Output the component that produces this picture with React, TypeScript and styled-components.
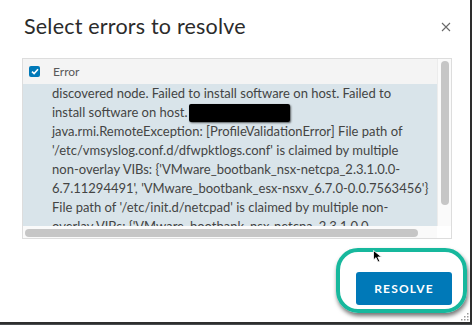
import styled, { createGlobalStyle } from "styled-components"

const GlobalStyle = createGlobalStyle`
  html, body {
    margin: 0;
    padding: 0;
    background: #4b4e51;
    font-family: Lato, "Open Sans", sans-serif;
  }
`

const Dialog = styled.div`
  position: relative;
  box-sizing: border-box;
  width: 472px;
  height: 324px;
  background: #ffffff;
  border-right: 2px solid #2e2e2e;
  border-bottom: 2px solid #2e2e2e;
  padding: 0 18px 0 22px;
  display: flex;
  flex-direction: column;
`

const Header = styled.div`
  height: 54px;
  display: flex;
  align-items: center;
  justify-content: space-between;
`

const Title = styled.h3`
  margin: 0 0 0 2px;
  font-size: 21.5px;
  line-height: 1;
  font-weight: 400;
  color: #2b2b2b;
  letter-spacing: 0.2px;
`

const Close = styled.button`
  border: 0;
  background: none;
  padding: 0;
  margin-right: 1px;
  width: 10px;
  height: 10px;
  display: flex;
`

const Panel = styled.div`
  margin-top: 4px;
  height: 179px;
  border: 1px solid #dddddd;
  display: grid;
  grid-template-columns: 1fr 14px;
  grid-template-rows: 1fr 12px;
`

const Grid = styled.div`
  display: flex;
  flex-direction: column;
  overflow: hidden;
`

const GridHead = styled.div`
  height: 25px;
  flex-shrink: 0;
  display: flex;
  align-items: center;
  gap: 13px;
  padding-left: 6px;
  background: #f4f4f4;
  font-size: 12px;
  color: #595959;
`

const Check = styled.span`
  width: 11px;
  height: 11px;
  border-radius: 2px;
  background: #0079b8;
  display: flex;
  align-items: center;
  justify-content: center;
`

const GridBody = styled.div`
  flex: 1;
  background: #d9e4ea;
  padding-left: 29px;
  overflow: hidden;
`

const Lines = styled.div`
  font-size: 13px;
  line-height: 19px;
  color: #444444;
`

const Line = styled.div`
  white-space: nowrap;
  display: flex;
  align-items: center;
  height: 19px;
`

const Redact = styled.span`
  display: inline-block;
  width: 101px;
  height: 18px;
  margin-left: 1px;
  background: #000;
  border-radius: 2px;
  box-shadow: 1px 1px 2px rgba(0, 0, 0, 0.6);
`

const VTrack = styled.div`
  background: #fafafa;
  border-left: 1px solid #ececec;
  padding: 2px 0 0 3px;
`

const VThumb = styled.div`
  width: 8px;
  height: 144px;
  border-radius: 4px;
  background: #c6c6c6;
`

const HTrack = styled.div`
  background: #fafafa;
  padding: 3px 0 0 2px;
`

const HThumb = styled.div`
  width: 393px;
  height: 8px;
  border-radius: 4px;
  background: #c6c6c6;
`

const Corner = styled.div`
  background: #ffffff;
`

const Footer = styled.div`
  margin-top: 33px;
  display: flex;
  justify-content: flex-end;
`

const PrimaryButton = styled.button`
  width: 96px;
  height: 33px;
  border: 0;
  border-radius: 3px;
  background: #0079b8;
  color: #ffffff;
  font-family: Lato, "Open Sans", sans-serif;
  font-size: 12px;
  font-weight: 700;
  letter-spacing: 1.2px;
`

const Highlight = styled.div`
  position: absolute;
  left: 336px;
  top: 248px;
  width: 131px;
  height: 65px;
  box-sizing: border-box;
  border: 4px solid #17b89d;
  border-radius: 22px;
  box-shadow: 1px 3px 4px rgba(0, 0, 0, 0.55);
`

const Pointer = styled.svg`
  position: absolute;
  left: 373px;
  top: 250px;
`

const Grip = styled.svg`
  position: absolute;
  right: 0;
  bottom: 0;
`

const lines = [
  "discovered node. Failed to install software on host. Failed to",
  "install software on host.",
  "java.rmi.RemoteException: [ProfileValidationError] File path of",
  "'/etc/vmsyslog.conf.d/dfwpktlogs.conf' is claimed by multiple",
  "non-overlay VIBs: {'VMware_bootbank_nsx-netcpa_2.3.1.0.0-",
  "6.7.11294491', 'VMware_bootbank_esx-nsxv_6.7.0-0.0.7563456'}",
  "File path of '/etc/init.d/netcpad' is claimed by multiple non-",
  "overlay VIBs: {'VMware_bootbank_nsx-netcpa_2.3.1.0.0-",
]

export default function App() {
  return (
    <>
      <GlobalStyle />
      <Dialog>
        <Header>
          <Title>Select errors to resolve</Title>
          <Close aria-label="Close">
            <svg width="10" height="10" viewBox="0 0 10 10">
              <path d="M1 1L9 9M9 1L1 9" stroke="#6a6a6a" strokeWidth="1.1" />
            </svg>
          </Close>
        </Header>
        <Panel>
          <Grid>
            <GridHead>
              <Check>
                <svg width="8" height="7" viewBox="0 0 8 7">
                  <path d="M1 3.6L3.1 5.6L7 1.3" fill="none" stroke="#fff" strokeWidth="1.6" />
                </svg>
              </Check>
              Error
            </GridHead>
            <GridBody>
              <Lines>
                {lines.map((l, i) => (
                  <Line key={i}>
                    {l}
                    {i === 1 && <Redact />}
                  </Line>
                ))}
              </Lines>
            </GridBody>
          </Grid>
          <VTrack>
            <VThumb />
          </VTrack>
          <HTrack>
            <HThumb />
          </HTrack>
          <Corner />
        </Panel>
        <Footer>
          <PrimaryButton>RESOLVE</PrimaryButton>
        </Footer>
        <Highlight />
        <Pointer width="10" height="13" viewBox="0 0 10 13">
          <path d="M0.5 0.5L0.5 10L3 7.6L5 12L6.8 11.2L4.8 7L8.5 7Z" fill="#000" stroke="#fff" strokeWidth="0.8" />
        </Pointer>
        <Grip width="9" height="9" viewBox="0 0 9 9">
          <g fill="#9a9a9a">
            <rect x="6" y="0" width="1.5" height="1.5" />
            <rect x="3" y="3" width="1.5" height="1.5" />
            <rect x="6" y="3" width="1.5" height="1.5" />
            <rect x="0" y="6" width="1.5" height="1.5" />
            <rect x="3" y="6" width="1.5" height="1.5" />
            <rect x="6" y="6" width="1.5" height="1.5" />
          </g>
        </Grip>
      </Dialog>
    </>
  )
}
